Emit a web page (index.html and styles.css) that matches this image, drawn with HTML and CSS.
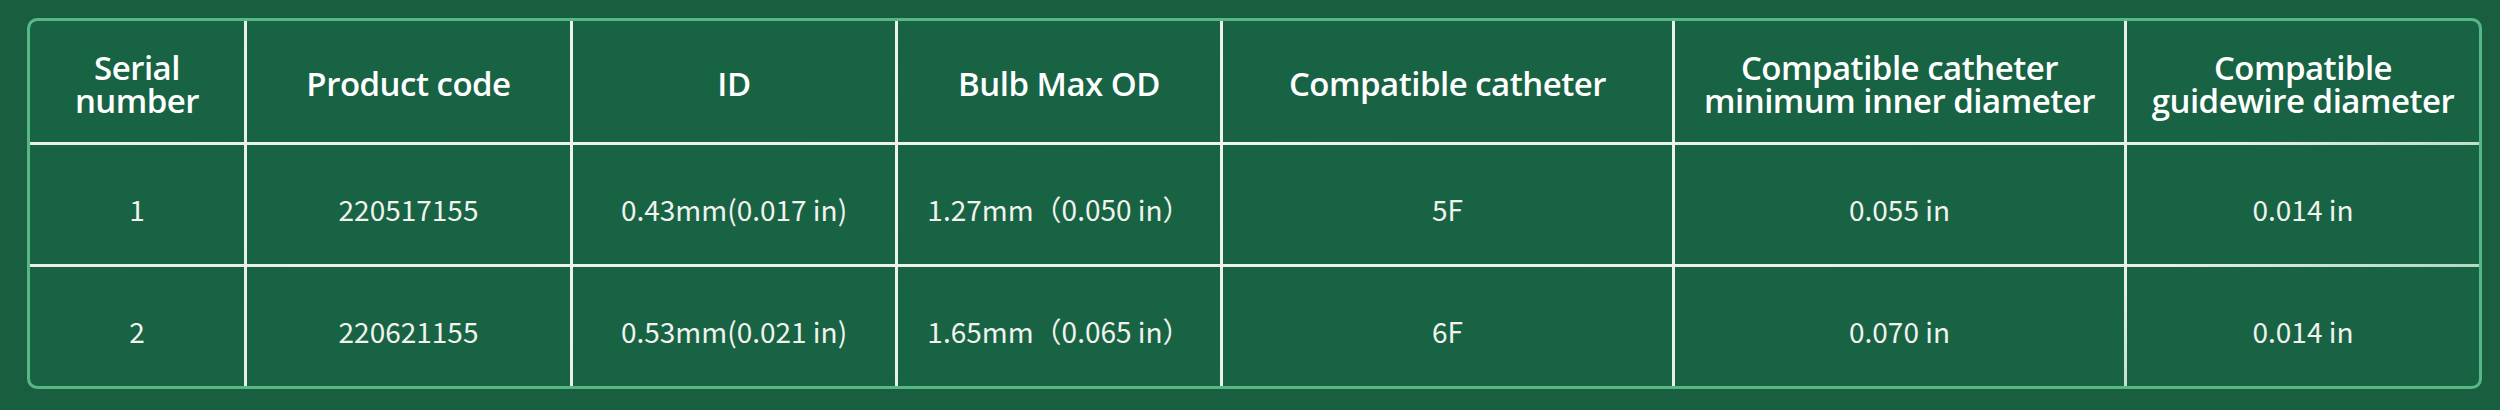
FILE: index.html
```html
<!DOCTYPE html>
<html lang="en">
<head>
<meta charset="utf-8">
<title>Product specifications</title>
<link rel="stylesheet" href="styles.css">
</head>
<body>
<div class="page">
  <div class="spec-table">
    <div class="cell head">Serial<br>number</div>
    <div class="cell head">Product code</div>
    <div class="cell head">ID</div>
    <div class="cell head">Bulb Max OD</div>
    <div class="cell head">Compatible catheter</div>
    <div class="cell head">Compatible catheter<br>minimum inner diameter</div>
    <div class="cell head">Compatible<br>guidewire diameter</div>

    <div class="cell">1</div>
    <div class="cell">220517155</div>
    <div class="cell">0.43mm(0.017 in)</div>
    <div class="cell">1.27mm（0.050 in）</div>
    <div class="cell">5F</div>
    <div class="cell">0.055 in</div>
    <div class="cell">0.014 in</div>

    <div class="cell">2</div>
    <div class="cell">220621155</div>
    <div class="cell">0.53mm(0.021 in)</div>
    <div class="cell">1.65mm（0.065 in）</div>
    <div class="cell">6F</div>
    <div class="cell">0.070 in</div>
    <div class="cell">0.014 in</div>
  </div>
</div>
</body>
</html>
```

FILE: styles.css
```css
html, body {
  margin: 0;
  padding: 0;
  background: #1a5e40;
}

.page {
  width: 2500px;
  height: 410px;
  box-sizing: border-box;
  padding: 18px 0 0 27px;
  background: #1a5e40;
}

.spec-table {
  display: grid;
  width: max-content;
  grid-template-columns: 214px 323px 322px 322px 449px 449px 352px;
  grid-template-rows: 121px 119px 119px;
  gap: 3px;
  border: 3px solid #56b885;
  border-radius: 10px;
  overflow: hidden;
  background: radial-gradient(ellipse 78% 140% at 42% 35%, #f0f4f0 0%, #e8efe9 62%, #9ad2b2 84%, #58b886 100%);
}

.cell {
  display: flex;
  align-items: center;
  justify-content: center;
  text-align: center;
  background: #176344;
  color: #f1f3ee;
  font-family: "Noto Sans CJK SC", "Noto Sans", sans-serif;
  font-weight: 400;
  font-size: 28px;
  padding-top: 8px;
  box-sizing: border-box;
}

.cell.head {
  font-family: "Open Sans", "Noto Sans", sans-serif;
  font-weight: 580;
  font-size: 33px;
  line-height: 33px;
  letter-spacing: -0.5px;
  padding-top: 4px;
  color: #ffffff;
}
```
